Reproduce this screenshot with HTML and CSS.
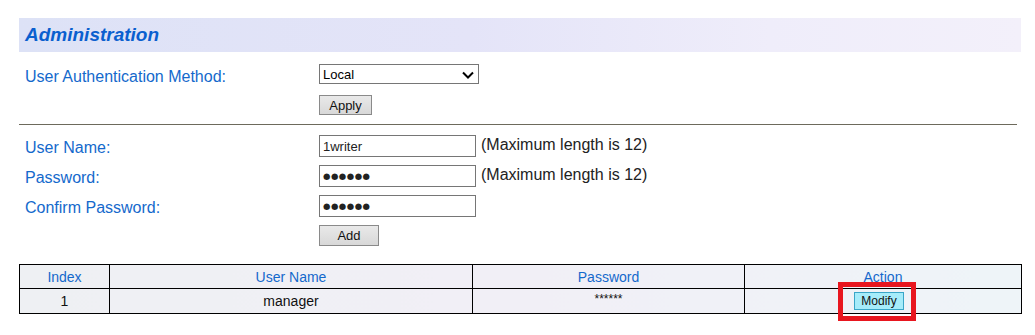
FILE: index.html
```html
<!DOCTYPE html>
<html>
<head>
<meta charset="utf-8">
<link rel="stylesheet" href="styles.css">
</head>
<body>
<div class="page">
  <div class="banner"><h1 class="title">Administration</h1></div>

  <div class="form-grid auth">
    <div class="label">User Authentication Method:</div>
    <div class="field">
      <div class="select">
        <span>Local</span>
        <svg class="chev" width="12" height="8" viewBox="0 0 12 8"><path d="M1 1.5 L6 6.5 L11 1.5" fill="none" stroke="#000" stroke-width="2"/></svg>
      </div>
    </div>
    <div></div>
    <div class="field"><button class="btn btn-apply">Apply</button></div>
  </div>

  <div class="divider"></div>

  <div class="form-grid users">
    <div class="label">User Name:</div>
    <div class="field"><div class="input">1writer</div><span class="hint">(Maximum length is 12)</span></div>
    <div class="label">Password:</div>
    <div class="field"><div class="input dots">●●●●●●</div><span class="hint">(Maximum length is 12)</span></div>
    <div class="label">Confirm Password:</div>
    <div class="field"><div class="input dots">●●●●●●</div></div>
    <div></div>
    <div class="field"><button class="btn btn-add">Add</button></div>
  </div>

  <table class="users-table">
    <colgroup><col class="c1"><col class="c2"><col class="c3"><col class="c4"></colgroup>
    <thead>
      <tr><th>Index</th><th>User Name</th><th>Password</th><th>Action</th></tr>
    </thead>
    <tbody>
      <tr><td>1</td><td>manager</td><td class="stars">******</td><td class="action"><span class="hl"><button class="btn-modify">Modify</button></span></td></tr>
    </tbody>
  </table>
</div>
</body>
</html>
```

FILE: styles.css
```css
html, body {
  margin: 0;
  padding: 0;
  background: #fff;
  font-family: "Liberation Sans", Arial, sans-serif;
}
.page {
  padding: 18px 0 30px 19px;
  width: 1002px;
}
.banner {
  height: 34px;
  background: linear-gradient(90deg, #dde2f6 0%, #e4e4f8 45%, #efedfa 75%, #f3f0fa 100%);
  display: flex;
  align-items: center;
}
.title {
  margin: 0 0 0 6px;
  font-size: 19px;
  font-weight: bold;
  font-style: italic;
  color: #0a5fcf;
}
.form-grid {
  display: grid;
  grid-template-columns: 300px 1fr;
  align-items: start;
}
.auth {
  margin-top: 12px;
  grid-template-rows: 20px 20px;
  row-gap: 11px;
}
.label {
  padding-left: 6px;
  font-size: 16px;
  line-height: 18px;
  color: #1469cc;
}
.auth .label { padding-top: 4px; }
.field {
  display: flex;
  align-items: center;
}
.select {
  box-sizing: border-box;
  width: 160px;
  height: 20px;
  border: 1px solid #767676;
  display: flex;
  align-items: center;
  justify-content: space-between;
  padding: 0 4px 0 3px;
  font-size: 13px;
  color: #000;
}
.chev { margin-top: 1px; }
.btn {
  box-sizing: border-box;
  height: 20px;
  border: 1px solid #8a8a8a;
  background: linear-gradient(#e9e9e9, #d8d8d8);
  font-family: "Liberation Sans", Arial, sans-serif;
  font-size: 13px;
  color: #111;
  padding: 0;
}
.btn-apply { width: 53px; }
.btn-add { width: 60px; height: 21px; }
.divider {
  margin-top: 9px;
  width: 998px;
  height: 1px;
  background: #6d6a5c;
}
.users {
  margin-top: 10px;
  grid-template-rows: 22px 22px 22px 21px;
  row-gap: 8px;
}
.users .label { padding-top: 4px; }
.input {
  box-sizing: border-box;
  width: 157px;
  height: 22px;
  border: 1px solid #767676;
  font-size: 13px;
  color: #222;
  padding: 0 3px;
  display: flex;
  align-items: center;
}
.input.dots {
  font-family: "DejaVu Sans", sans-serif;
  font-size: 8.5px;
  letter-spacing: 0.5px;
  color: #222;
}
.hint {
  margin-left: 5px;
  font-size: 16px;
  line-height: 18px;
  color: #222;
  margin-top: -2px;
}
.users-table {
  margin-top: 18px;
  width: 1002px;
  table-layout: fixed;
  border-collapse: collapse;
  background: linear-gradient(90deg, #eef0f3 0%, #f1eff6 50%, #eef4f8 100%);
  font-size: 14px;
}
.c1 { width: 90px; }
.c2 { width: 363px; }
.c3 { width: 272px; }
.c4 { width: 277px; }
.users-table th, .users-table td {
  border: 1px solid #000;
  text-align: center;
  padding: 0;
}
.users-table th {
  height: 24px;
  font-weight: normal;
  color: #1469cc;
  vertical-align: middle;
  padding-top: 1px;
  box-sizing: border-box;
}
.users-table td {
  height: 24px;
  color: #111;
  vertical-align: middle;
}
.stars { font-size: 12px; vertical-align: top !important; padding-top: 3px !important; box-sizing: border-box; }
.hl {
  display: inline-block;
  position: relative;
  vertical-align: middle;
  margin-left: -8px;
}
.hl::after {
  content: "";
  position: absolute;
  left: -16px;
  top: -10px;
  width: 78px;
  height: 39px;
  box-sizing: border-box;
  border: 5px solid #e8161f;
}
.btn-modify {
  display: block;
  box-sizing: border-box;
  width: 50px;
  height: 18px;
  padding: 0;
  border: 1px solid #3aa6c8;
  background: #a6ecfa;
  font-family: "Liberation Sans", Arial, sans-serif;
  font-size: 12px;
  color: #111;
}
```
